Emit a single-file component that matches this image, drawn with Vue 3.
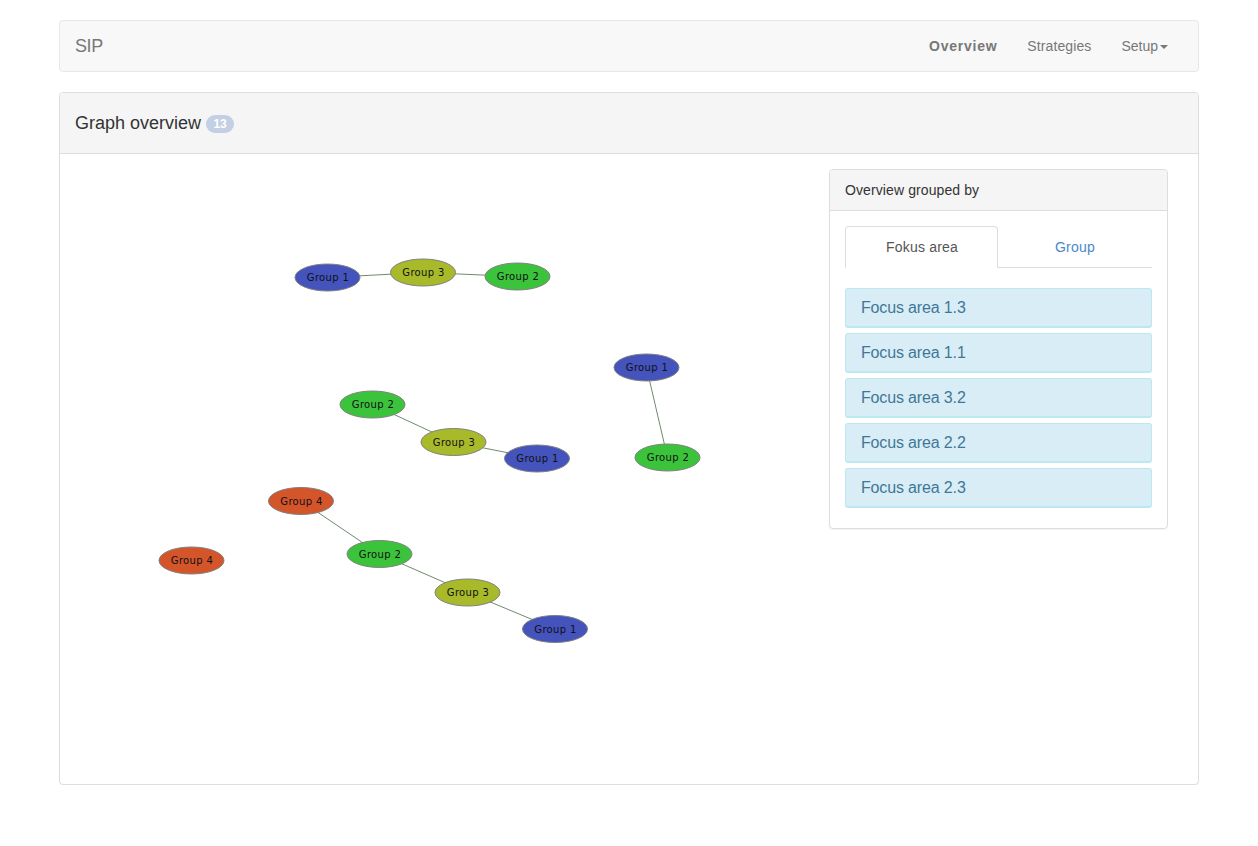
<script setup>
const nodes = [
  { x: 327.5, y: 277.5, c: 'blue', t: 'Group 1' },
  { x: 423, y: 272.5, c: 'olive', t: 'Group 3' },
  { x: 517.5, y: 276.5, c: 'green', t: 'Group 2' },
  { x: 646.5, y: 367.5, c: 'blue', t: 'Group 1' },
  { x: 667.5, y: 457.5, c: 'green', t: 'Group 2' },
  { x: 372.5, y: 404.5, c: 'green', t: 'Group 2' },
  { x: 453.5, y: 442, c: 'olive', t: 'Group 3' },
  { x: 537, y: 458.5, c: 'blue', t: 'Group 1' },
  { x: 301, y: 501, c: 'orange', t: 'Group 4' },
  { x: 191.5, y: 560.5, c: 'orange', t: 'Group 4' },
  { x: 379.5, y: 554, c: 'green', t: 'Group 2' },
  { x: 467.5, y: 592.5, c: 'olive', t: 'Group 3' },
  { x: 555, y: 629, c: 'blue', t: 'Group 1' }
]
const edges = [[0, 1], [1, 2], [3, 4], [5, 6], [6, 7], [8, 10], [10, 11], [11, 12]]
const items = ['Focus area 1.3', 'Focus area 1.1', 'Focus area 3.2', 'Focus area 2.2', 'Focus area 2.3']
</script>

<template>
  <div class="container">
    <nav class="navbar">
      <span class="brand">SIP</span>
      <ul class="nav">
        <li class="active">Overview</li>
        <li class="wide">Strategies</li>
        <li>Setup<span class="caret"></span></li>
      </ul>
    </nav>
    <section class="panel">
      <header class="panel-heading">
        <h3>Graph overview</h3>
        <span class="badge">13</span>
      </header>
      <div class="panel-body">
        <div class="graph">
          <svg width="739" height="600" viewBox="75 169 739 600">
            <line v-for="(e, i) in edges" :key="i" class="edge"
              :x1="nodes[e[0]].x" :y1="nodes[e[0]].y" :x2="nodes[e[1]].x" :y2="nodes[e[1]].y" />
            <g v-for="(n, i) in nodes" :key="'n' + i">
              <ellipse :class="n.c" :cx="n.x" :cy="n.y" rx="32.5" ry="13.5" />
              <text :x="n.x + 0.5" :y="n.y + 3.5" text-anchor="middle">{{ n.t }}</text>
            </g>
          </svg>
        </div>
        <aside class="card">
          <div class="card-heading">Overview grouped by</div>
          <div class="card-body">
            <div class="tabs">
              <div class="tab on">Fokus area</div>
              <div class="tab link">Group</div>
            </div>
            <div class="list">
              <div v-for="item in items" :key="item" class="alert">{{ item }}</div>
            </div>
          </div>
        </aside>
      </div>
    </section>
  </div>
</template>

<style scoped>
.container {
  box-sizing: border-box;
  width: 1140px;
  margin: 0 0 0 59px;
  padding-top: 20px;
  font-family: "Liberation Sans", Arial, sans-serif;
  font-size: 14px;
  color: #333;
}
.navbar {
  box-sizing: border-box;
  height: 52px;
  display: flex;
  align-items: center;
  justify-content: space-between;
  padding: 0 30px 0 15px;
  background: #f8f8f8;
  border: 1px solid #e7e7e7;
  border-radius: 4px;
  margin-bottom: 20px;
}
.brand { font-size: 18px; letter-spacing: -.4px; color: #777; }
.nav {
  display: flex;
  gap: 30px;
  list-style: none;
  margin: 0;
  padding: 0;
  color: #777;
}
.nav .active { font-weight: 700; letter-spacing: .75px; }
.nav .wide { letter-spacing: .1px; }
.caret {
  display: inline-block;
  width: 0;
  height: 0;
  margin-left: 2px;
  vertical-align: middle;
  border-top: 4px solid #777;
  border-left: 4px solid transparent;
  border-right: 4px solid transparent;
}
.panel {
  box-sizing: border-box;
  height: 693px;
  border: 1px solid #ddd;
  border-radius: 4px;
  box-shadow: 0 1px 1px rgba(0, 0, 0, .05);
  display: flex;
  flex-direction: column;
}
.panel-heading {
  box-sizing: border-box;
  height: 61px;
  display: flex;
  align-items: center;
  gap: 5px;
  padding: 0 15px;
  background: #f5f5f5;
  border-bottom: 1px solid #ddd;
  border-radius: 3px 3px 0 0;
}
h3 { margin: 0; font-size: 18px; font-weight: 400; color: #333; }
.badge {
  box-sizing: border-box;
  height: 18px;
  width: 28px;
  margin-top: 2px;
  border-radius: 10px;
  background: #c3cfe2;
  color: #fff;
  font-size: 12px;
  font-weight: 700;
  line-height: 18px;
  text-align: center;
}
.panel-body {
  flex: 1;
  display: flex;
  align-items: flex-start;
  justify-content: space-between;
  padding: 15px 30px 15px 15px;
}
.graph svg { display: block; }
.edge { stroke: #6f8a6f; stroke-width: 1; }
ellipse { stroke: #808080; stroke-width: 1; }
.blue { fill: #4553bd; }
.green { fill: #3cc33c; }
.olive { fill: #a8ba2a; }
.orange { fill: #d5552b; }
text {
  font-family: "DejaVu Sans", Verdana, sans-serif;
  font-size: 10px;
  letter-spacing: .35px;
  fill: #111;
}
.card {
  box-sizing: border-box;
  width: 339px;
  height: 360px;
  border: 1px solid #ddd;
  border-radius: 4px;
  box-shadow: 0 1px 1px rgba(0, 0, 0, .05);
}
.card-heading {
  box-sizing: border-box;
  height: 41px;
  padding: 0 15px;
  line-height: 40px;
  letter-spacing: .1px;
  background: #f5f5f5;
  border-bottom: 1px solid #ddd;
  border-radius: 3px 3px 0 0;
}
.card-body { padding: 15px; }
.tabs {
  display: flex;
  height: 42px;
  border-bottom: 1px solid #ddd;
  box-sizing: border-box;
}
.tab {
  box-sizing: border-box;
  width: 153px;
  height: 42px;
  padding-left: 1px;
  text-align: center;
  line-height: 40px;
  letter-spacing: .2px;
  border: 1px solid transparent;
  border-radius: 4px 4px 0 0;
}
.tab.on {
  color: #555;
  background: #fff;
  border-color: #ddd #ddd #fff;
}
.tab.link { color: #4a88cc; }
.list {
  display: flex;
  flex-direction: column;
  gap: 5px;
  margin-top: 20px;
}
.alert {
  box-sizing: border-box;
  height: 40px;
  padding: 0 15px;
  line-height: 37px;
  font-size: 16px;
  letter-spacing: -.15px;
  color: #3f7896;
  background: #d9edf7;
  border: 1px solid #bce8f1;
  border-bottom-width: 2px;
  border-radius: 3px;
}
</style>
